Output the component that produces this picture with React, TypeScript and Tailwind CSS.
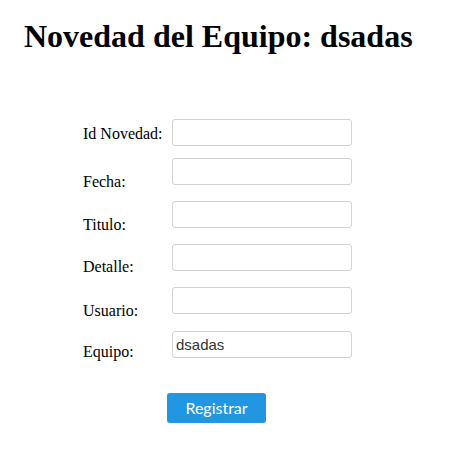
export default function App() {
  const rows = [
    { label: "Id Novedad:", pt: "pt-[6px]", h: "h-[39px]", value: "" },
    { label: "Fecha:", pt: "pt-[15px]", h: "h-[43px]", value: "" },
    { label: "Titulo:", pt: "pt-[15px]", h: "h-[43px]", value: "" },
    { label: "Detalle:", pt: "pt-[14px]", h: "h-[43px]", value: "" },
    { label: "Usuario:", pt: "pt-[15px]", h: "h-[44px]", value: "" },
    { label: "Equipo:", pt: "pt-[12px]", h: "h-[27px]", value: "dsadas" },
  ];

  return (
    <div className="w-[454px] h-[450px] bg-white text-black font-['Liberation_Serif',serif]">
      <h1 className="pl-[24px] pt-[18px] text-[32px] leading-[37px] font-bold">
        Novedad del Equipo: dsadas
      </h1>
      <form className="pl-[83px] pt-[64px]">
        {rows.map((r) => (
          <div key={r.label} className={`flex items-start ${r.h}`}>
            <label className={`w-[89px] text-[16px] leading-[18px] ${r.pt}`}>
              {r.label}
            </label>
            <input
              type="text"
              defaultValue={r.value}
              className="w-[180px] h-[27px] border border-[#d3d3d3] rounded-[3px] px-[3px] text-[15px] text-[#333] font-['Liberation_Sans',sans-serif] outline-none"
            />
          </div>
        ))}
        <div className="pl-[84px] pt-[35px]">
          <button
            type="submit"
            className="w-[99px] h-[30px] bg-[#2196e3] text-white rounded-[3px] text-[16px] font-['Lato',sans-serif]"
          >
            Registrar
          </button>
        </div>
      </form>
    </div>
  );
}
